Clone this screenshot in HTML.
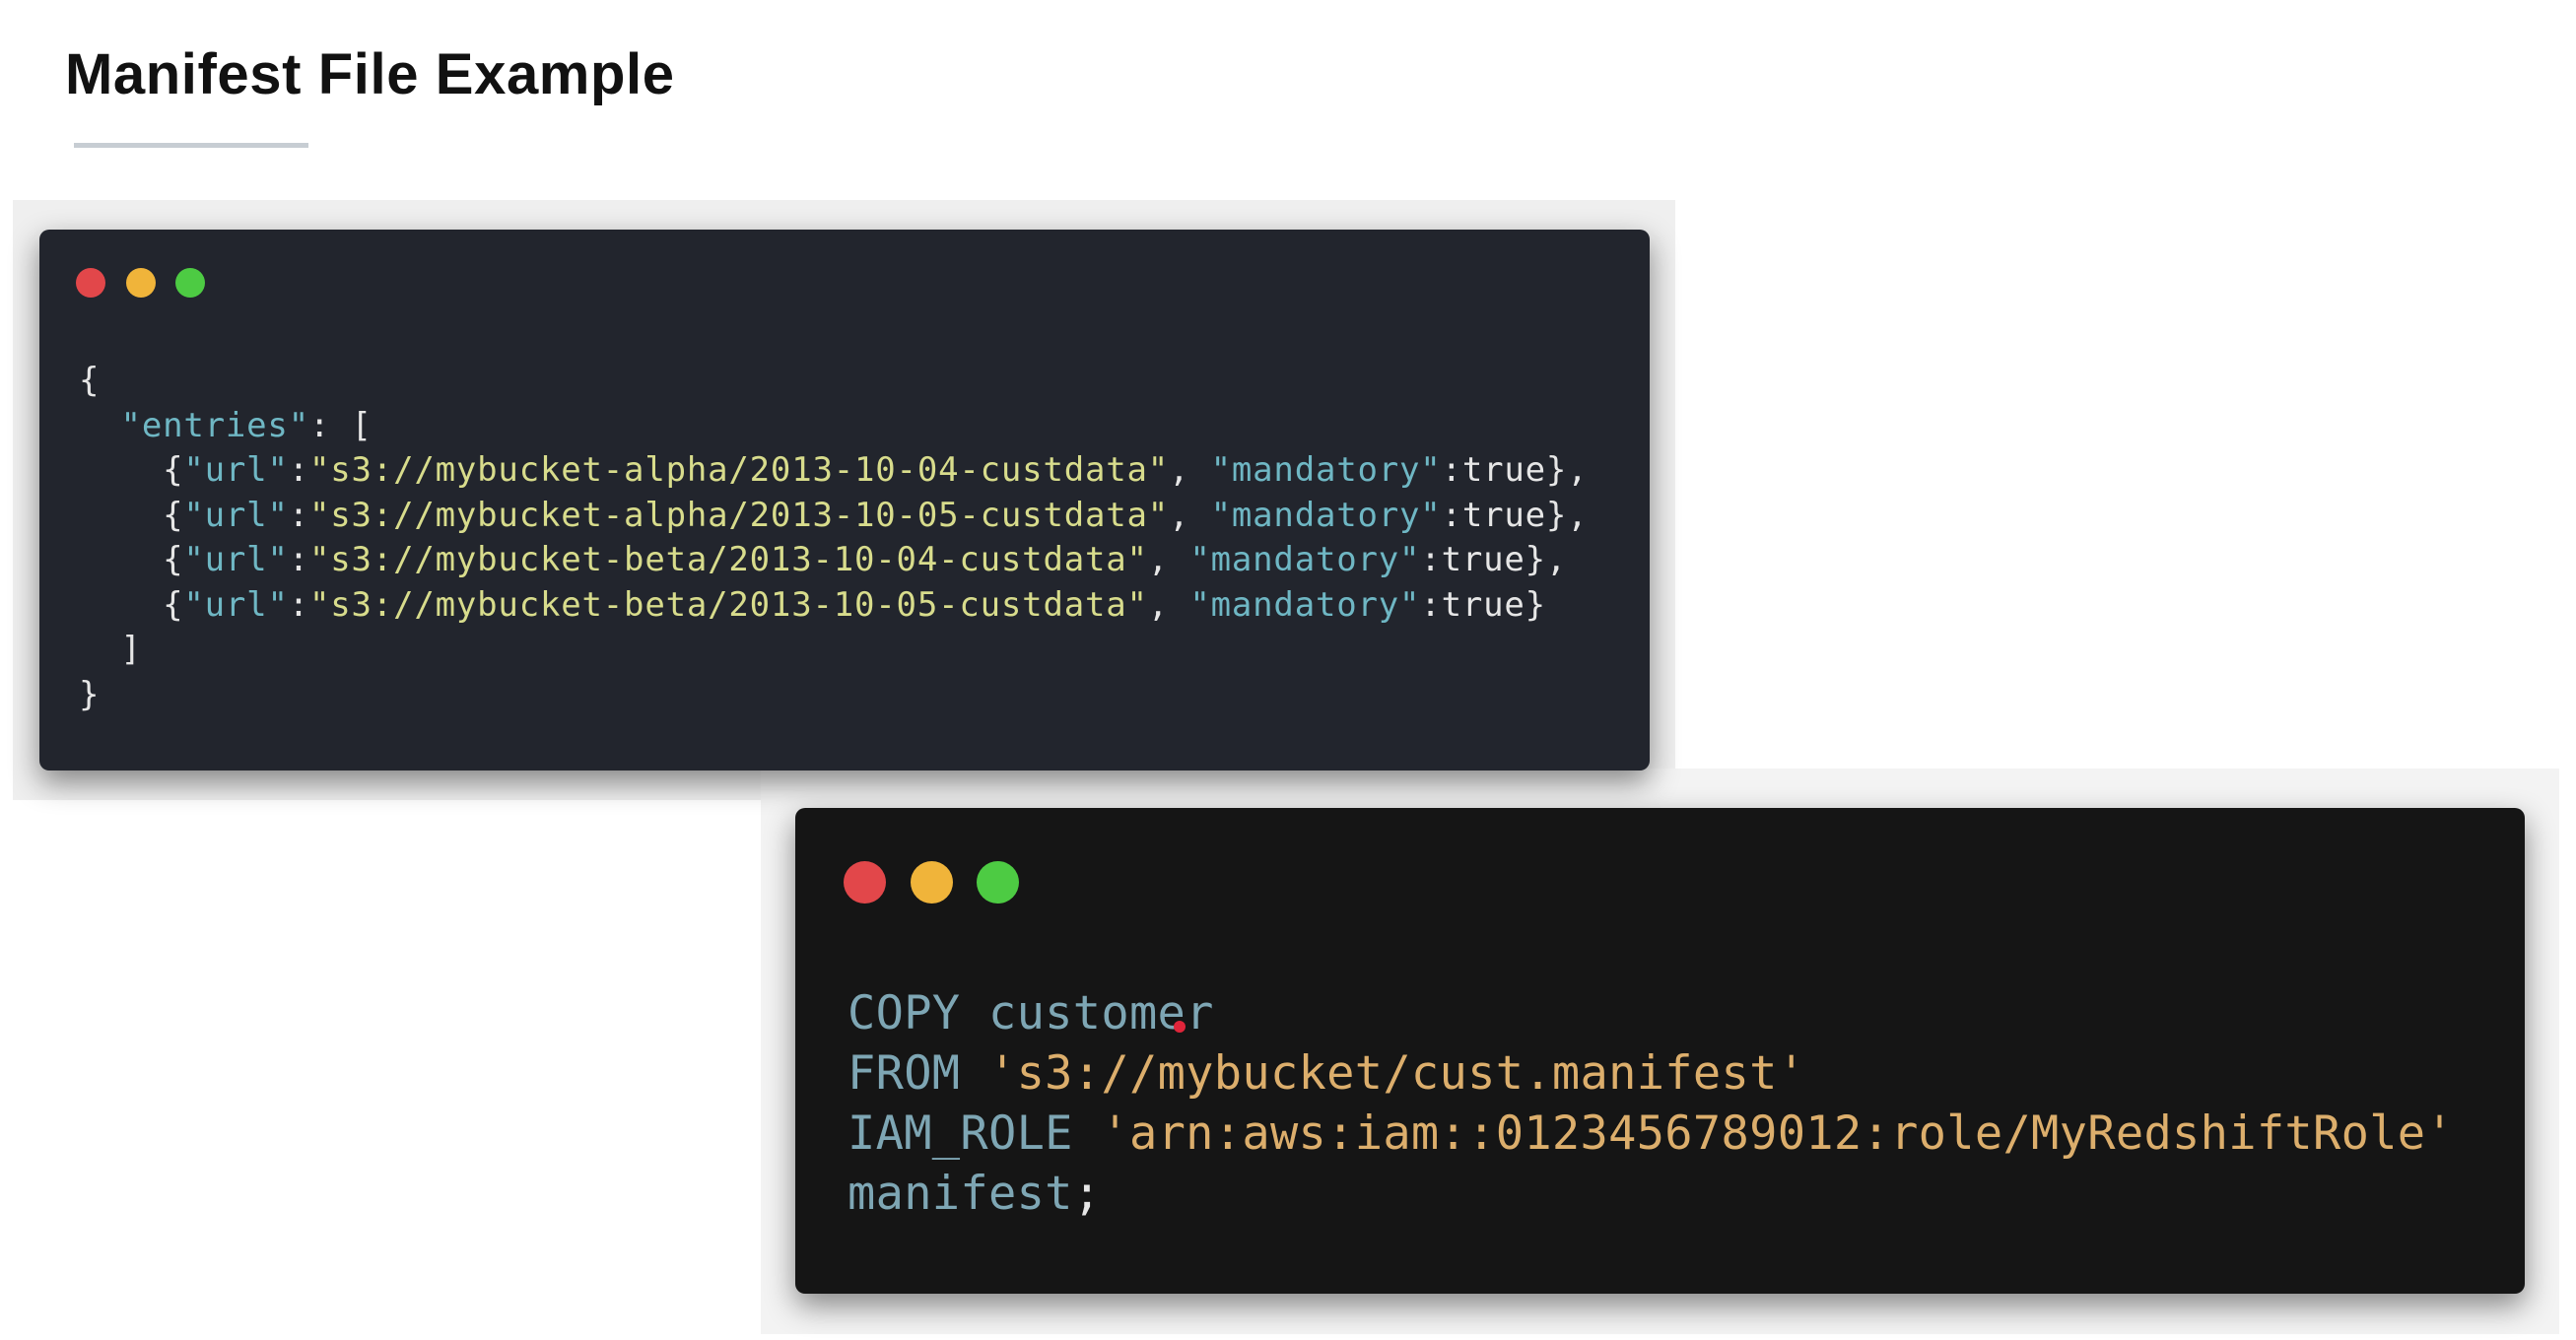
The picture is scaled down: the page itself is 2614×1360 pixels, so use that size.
<!DOCTYPE html>
<html><head><meta charset="utf-8"><style>
*{margin:0;padding:0;box-sizing:border-box}
body{width:2614px;height:1360px;background:#fff;position:relative;overflow:hidden;font-family:"Liberation Sans",sans-serif}
h1{position:absolute;left:66px;top:42px;font-size:58px;font-weight:bold;color:#111;letter-spacing:0.6px}
.ul{position:absolute;left:75px;top:145px;width:238px;height:5px;background:#c7cdd3}
.bd{position:absolute;background:#efefef}
.box{position:absolute;border-radius:10px;box-shadow:0 12px 30px rgba(0,0,0,0.45)}
.dot{position:absolute;border-radius:50%}
pre{position:absolute;font-family:"DejaVu Sans Mono","Liberation Mono",monospace;white-space:pre}
.k{color:#6fb7c4}.s{color:#d8dc8c}.p{color:#e6e6e6}
.k2{color:#7ea6b4}.s2{color:#dcae6c}
</style></head><body>
<h1>Manifest File Example</h1>
<div class="ul"></div>
<div class="bd" style="left:13px;top:203px;width:1687px;height:609px"></div>
<div class="bd" style="left:772px;top:780px;width:1825px;height:574px;background:#f3f3f3"></div>
<div class="box" style="left:40px;top:233px;width:1634px;height:549px;background:#22252d"></div>
<div class="dot" style="left:77px;top:272px;width:30px;height:30px;background:#e2474a"></div>
<div class="dot" style="left:128px;top:272px;width:30px;height:30px;background:#f0b43a"></div>
<div class="dot" style="left:178px;top:272px;width:30px;height:30px;background:#4dcb43"></div>
<pre class="p" style="left:80px;top:364px;font-size:34px;line-height:45.5px;letter-spacing:0.8px">{
  <span class="k">"entries"</span>: [
    {<span class="k">"url"</span>:<span class="s">"s3://mybucket-alpha/2013-10-04-custdata"</span>, <span class="k">"mandatory"</span>:true},
    {<span class="k">"url"</span>:<span class="s">"s3://mybucket-alpha/2013-10-05-custdata"</span>, <span class="k">"mandatory"</span>:true},
    {<span class="k">"url"</span>:<span class="s">"s3://mybucket-beta/2013-10-04-custdata"</span>, <span class="k">"mandatory"</span>:true},
    {<span class="k">"url"</span>:<span class="s">"s3://mybucket-beta/2013-10-05-custdata"</span>, <span class="k">"mandatory"</span>:true}
  ]
}</pre>
<div class="box" style="left:807px;top:820px;width:1755px;height:493px;background:#151515"></div>
<div class="dot" style="left:856px;top:874px;width:43px;height:43px;background:#e2474a"></div>
<div class="dot" style="left:924px;top:874px;width:43px;height:43px;background:#f0b43a"></div>
<div class="dot" style="left:991px;top:874px;width:43px;height:43px;background:#4dcb43"></div>
<pre class="k2" style="left:860px;top:998px;font-size:47px;line-height:61px;letter-spacing:0.3px">COPY customer
FROM <span class="s2">'s3://mybucket/cust.manifest'</span>
IAM_ROLE <span class="s2">'arn:aws:iam::0123456789012:role/MyRedshiftRole'</span>
manifest<span class="p">;</span></pre>
<div class="dot" style="left:1191px;top:1036px;width:12px;height:12px;background:#e0253a"></div>
</body></html>
